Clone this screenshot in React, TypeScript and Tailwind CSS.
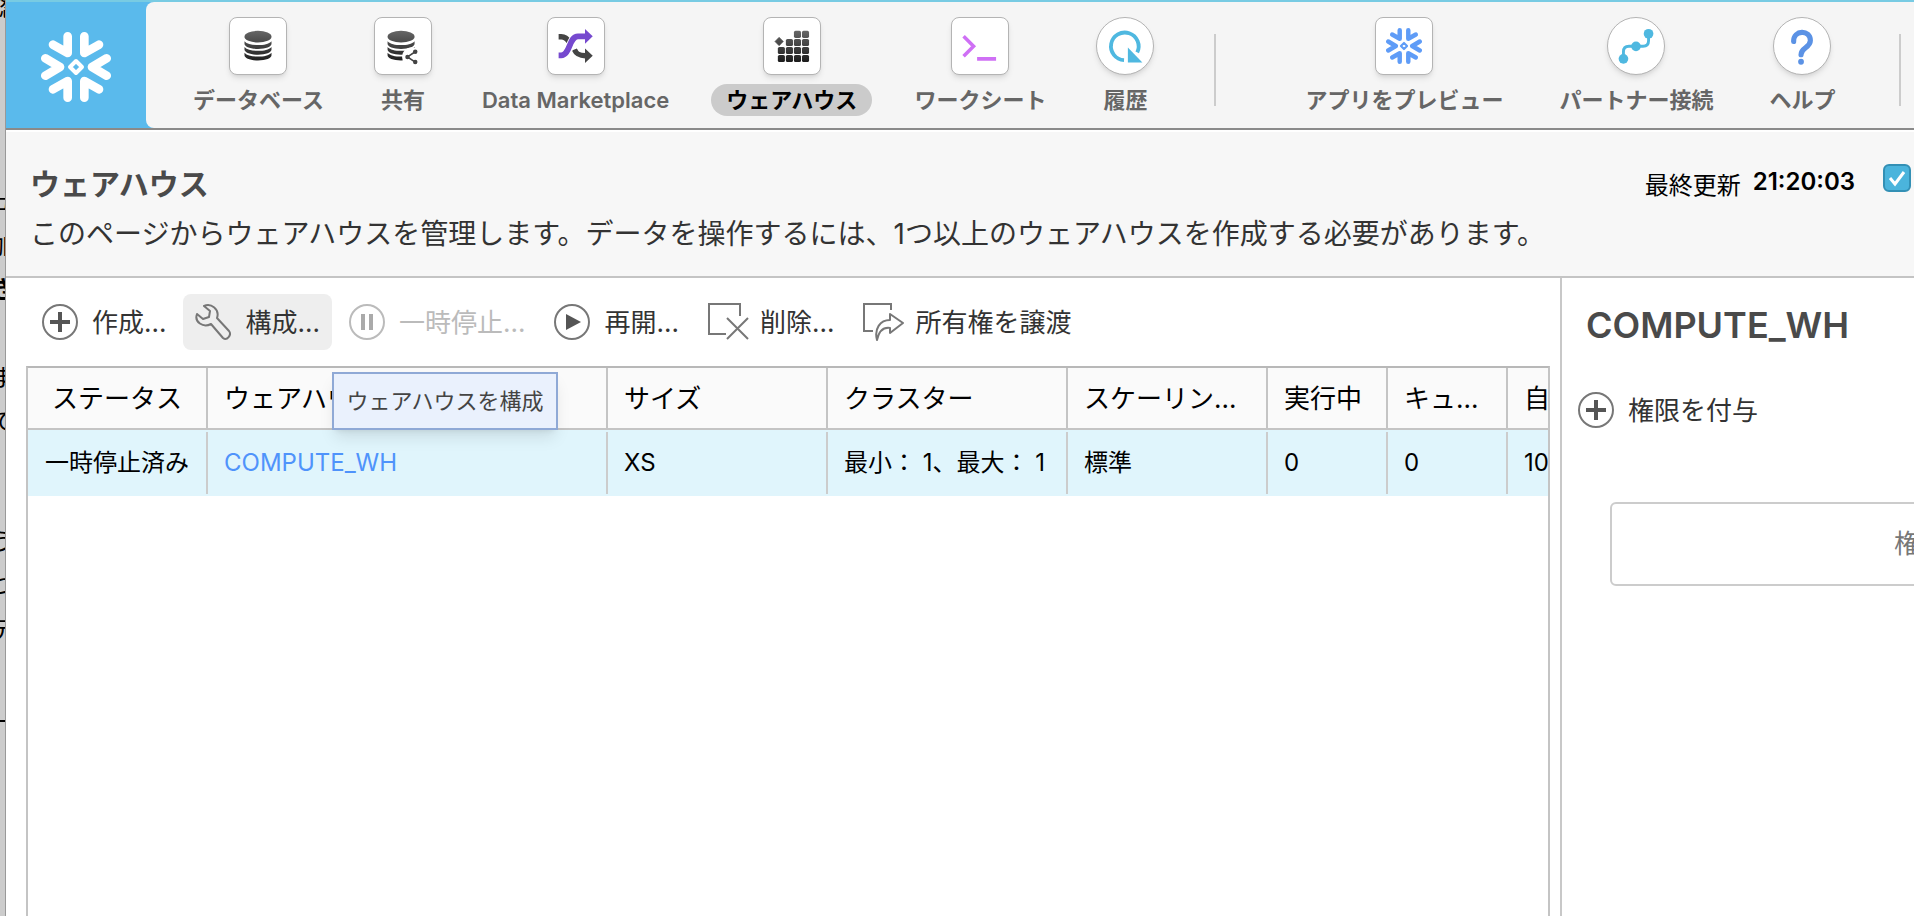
import type { ReactNode } from "react";

const Snowflake = ({ className }: { className: string }) => (
  <svg viewBox="0 0 210 210" fill="none" stroke="currentColor" className={className}>
    <g strokeWidth="26" strokeLinecap="round" strokeLinejoin="round">
      <path d="M80 13V63L36 38" />
      <path d="M130 13V63L174 38" />
      <path d="M80 197V147L36 172" />
      <path d="M130 197V147L174 172" />
      <path d="M13 79L57 105L13 131" />
      <path d="M197 79L153 105L197 131" />
    </g>
    <path d="M105 87L123 105L105 123L87 105Z" strokeWidth="12" strokeLinejoin="round" />
  </svg>
);

const Tile = ({ round, children }: { round?: boolean; children: ReactNode }) => (
  <span
    className={`flex size-[58px] items-center justify-center border border-[#b4b4b4] bg-white shadow-md ${
      round ? "rounded-full" : "rounded-lg"
    }`}
  >
    {children}
  </span>
);

const Glyph = ({ children }: { children: ReactNode }) => (
  <svg viewBox="0 0 174 174" fill="none" className="size-full">
    <defs>
      <linearGradient id="ink" gradientUnits="userSpaceOnUse" x1="0" y1="40" x2="0" y2="136">
        <stop offset="0" stopColor="#666" />
        <stop offset="1" stopColor="#1c1c1c" />
      </linearGradient>
    </defs>
    {children}
  </svg>
);

const Disks = () => (
  <g fill="url(#ink)">
    <ellipse cx="87" cy="58" rx="42" ry="18" />
    {[72, 90, 108].map((y) => (
      <path key={y} d={`M45 ${y}c8 9 24 12 42 12s34-3 42-12v8c0 9-18 16-42 16s-42-7-42-16z`} />
    ))}
  </g>
);

const bricks = [
  [93, 40], [118, 40],
  [68, 65], [93, 65], [118, 65],
  [43, 90], [68, 90], [93, 90], [118, 90],
  [43, 115], [68, 115], [93, 115], [118, 115],
];

const mainNav = [
  { label: "データベース", icon: <Disks /> },
  {
    label: "共有",
    icon: (
      <>
        <g transform="translate(-6 0)">
          <Disks />
        </g>
        <circle cx="114" cy="121" r="30" fill="#fff" />
        <path d="M125 105L101 121L125 137" stroke="#444" strokeWidth="5" />
        <g fill="#444">
          <circle cx="125" cy="105" r="7" />
          <circle cx="101" cy="121" r="7" />
          <circle cx="125" cy="137" r="7" />
        </g>
      </>
    ),
  },
  {
    label: "Data Marketplace",
    icon: (
      <>
        <path d="M33 58h8c12 0 19 6 24 16M82 98c6 14 14 19 34 19" stroke="#444" strokeWidth="17" />
        <path d="M115 95L139 117L115 140Z" fill="#444" />
        <path d="M41 117c30 0 24-60 54-60" stroke="#fff" strokeWidth="26" />
        <path d="M33 116h8c28 0 24-59 52-59h24" stroke="#7649cf" strokeWidth="18" />
        <path d="M115 34L139 57L115 80Z" fill="#7649cf" />
      </>
    ),
  },
  {
    label: "ウェアハウス",
    active: true,
    icon: (
      <g fill="url(#ink)">
        {bricks.map(([x, y]) => (
          <rect key={`${x}-${y}`} x={x} y={y} width="22" height="22" rx="5" />
        ))}
        <path d="M47 60L60 73L47 86L34 73Z" stroke="#555" strokeWidth="2" strokeLinejoin="round" />
      </g>
    ),
  },
  {
    label: "ワークシート",
    icon: <path d="M36 57L67 88L36 119M78 127H137" stroke="#cf70f5" strokeWidth="11" />,
  },
  {
    label: "履歴",
    round: true,
    icon: (
      <>
        <path d="M84 131A43 43 0 1 1 125 107" stroke="#4fb8e0" strokeWidth="12" />
        <path d="M96 92V138H141Z" fill="#4fb8e0" />
      </>
    ),
  },
];

const sideNav = [
  { label: "アプリをプレビュー", logo: true, icon: null },
  {
    label: "パートナー接続",
    round: true,
    icon: (
      <>
        <path d="M48 127V105q0-17 17-17H109q17 0 17-17V49" stroke="#4fb8e0" strokeWidth="9" />
        <g fill="#4fb8e0">
          <circle cx="126" cy="49" r="15" />
          <circle cx="87" cy="88" r="15" />
          <circle cx="48" cy="127" r="15" />
        </g>
      </>
    ),
  },
  {
    label: "ヘルプ",
    round: true,
    icon: (
      <>
        <path
          d="M61 73C60 36 113 35 113 70C113 93 84 91 84 114"
          stroke="#5b92e5"
          strokeWidth="16"
          strokeLinecap="round"
        />
        <circle cx="84" cy="136" r="9" fill="#5b92e5" />
      </>
    ),
  },
];

type NavItemProps = {
  label: string;
  icon: ReactNode;
  active?: boolean;
  round?: boolean;
  logo?: boolean;
};

const NavItem = ({ label, icon, active, round, logo }: NavItemProps) => (
  <button type="button" className="flex shrink-0 flex-col items-center gap-[9px]">
    <Tile round={round}>
      {logo ? <Snowflake className="size-9 text-[#5f9cf7]" /> : <Glyph>{icon}</Glyph>}
    </Tile>
    <span
      className={`h-8 rounded-full px-[15px] text-[22px] leading-8 font-semibold whitespace-nowrap ${
        active ? "bg-[#cbcbcb] text-black" : "text-[#666]"
      }`}
    >
      {label}
    </span>
  </button>
);

const PlusIcon = () => (
  <svg viewBox="0 0 36 36" fill="none" className="size-9 shrink-0">
    <circle cx="18" cy="18" r="17" stroke="#777" strokeWidth="2" />
    <path d="M18 8V28M8 18H28" stroke="#555" strokeWidth="4" />
  </svg>
);

const tools = [
  { label: "作成...", icon: <PlusIcon /> },
  {
    label: "構成...",
    hover: true,
    icon: (
      <svg viewBox="0 0 36 36" fill="none" stroke="#777" strokeWidth="2" strokeLinejoin="round" className="size-9">
        <path d="M9 2C16 -1 25 5 22 14L34 27C37 31 32 37 28 34L16 20C8 24 -1 18 2 10L8 15L14 13L15 7Z" />
      </svg>
    ),
  },
  {
    label: "一時停止...",
    disabled: true,
    icon: (
      <svg viewBox="0 0 36 36" fill="none" className="size-9">
        <circle cx="18" cy="18" r="17" stroke="#bbb" strokeWidth="2" />
        <path d="M14 10V26M22 10V26" stroke="#aaa" strokeWidth="4" />
      </svg>
    ),
  },
  {
    label: "再開...",
    icon: (
      <svg viewBox="0 0 36 36" fill="none" className="size-9">
        <circle cx="18" cy="18" r="17" stroke="#777" strokeWidth="2" />
        <path d="M12 10L27 18L12 26Z" fill="#555" />
      </svg>
    ),
  },
  {
    label: "削除...",
    icon: (
      <svg viewBox="0 0 42 38" fill="none" stroke="#777" strokeWidth="2" className="-mr-1 h-[38px] w-[42px]">
        <path d="M32 13V1H1V31H18M19 15L40 36M40 15L19 36" />
      </svg>
    ),
  },
  {
    label: "所有権を譲渡",
    icon: (
      <svg viewBox="0 0 42 38" fill="none" stroke="#777" strokeWidth="2" className="-mr-1 h-[38px] w-[42px]">
        <path d="M28 7V1H1V28H10" />
        <path d="M27 11L40 20L27 30V25C20 24 16 28 14 37C11 26 17 17 27 17Z" strokeLinejoin="round" />
      </svg>
    ),
  },
];

const columns = [
  { title: "ステータス", value: "一時停止済み", width: "w-[180px]", center: true },
  { title: "ウェアハウス", value: "COMPUTE_WH", width: "w-[400px]", link: true },
  { title: "サイズ", value: "XS", width: "w-[220px]" },
  { title: "クラスター", value: "最小： 1、最大： 1", width: "w-[240px]" },
  { title: "スケーリン...", value: "標準", width: "w-[200px]" },
  { title: "実行中", value: "0", width: "w-[120px]" },
  { title: "キュ...", value: "0", width: "w-[120px]" },
  { title: "自動", value: "10分", width: "w-[120px]" },
];

const Header = () => (
  <header className="flex h-[130px] border-t-2 border-b-2 border-t-[#78cbe3] border-b-[#8a8a8a] bg-[#5abaec]">
    <a
      href="#home"
      aria-label="Snowflake"
      className="flex w-[140px] shrink-0 items-center justify-center pt-1 text-white"
    >
      <Snowflake className="size-[70px]" />
    </a>
    <nav className="flex min-w-0 flex-1 items-start overflow-hidden rounded-l-lg bg-[#f5f5f5] pt-[15px] pl-8">
      <div className="flex gap-[27px]">
        {mainNav.map((item) => (
          <NavItem key={item.label} {...item} />
        ))}
      </div>
      <div className="mt-[17px] mr-[74px] ml-[52px] h-[72px] w-0.5 shrink-0 bg-[#ccc]" />
      <div className="flex gap-[26px]">
        {sideNav.map((item) => (
          <NavItem key={item.label} {...item} />
        ))}
      </div>
      <div className="mt-[17px] ml-[49px] h-[72px] w-0.5 shrink-0 bg-[#ccc]" />
    </nav>
  </header>
);

const PageTitle = () => (
  <section className="flex h-[148px] justify-between border-t-2 border-b-2 border-t-white border-b-[#c4c4c4] bg-[#f7f7f7] pr-[3px] pl-6">
    <div className="pt-8 whitespace-nowrap">
      <h1 className="text-[30px] leading-10 font-bold text-[#4a4a4a]">ウェアハウス</h1>
      <p className="mt-[10px] text-[28px] leading-10 text-[#333]">
        このページからウェアハウスを管理します。データを操作するには、1つ以上のウェアハウスを作成する必要があります。
      </p>
    </div>
    <div className="flex h-fit items-start gap-3 pt-8 text-2xl whitespace-nowrap text-black">
      <span className="mt-1.5">最終更新</span>
      <span className="mt-0.5 font-semibold">21:20:03</span>
      <span className="ml-4 grid size-7 place-items-center">
        <input
          type="checkbox"
          defaultChecked
          aria-label="自動更新"
          className="col-start-1 row-start-1 size-7 appearance-none rounded-md border-2 border-[#3390b5] bg-[#4bb4dc]"
        />
        <svg viewBox="0 0 28 28" fill="none" className="pointer-events-none col-start-1 row-start-1 size-7">
          <path d="M7 14L12 20L21 8" stroke="#fff" strokeWidth="3" />
        </svg>
      </span>
    </div>
  </section>
);

const Toolbar = () => (
  <div className="flex gap-[5px] px-6 py-4">
    {tools.map(({ label, icon, hover, disabled }) => (
      <div key={label} className="relative">
        <button
          type="button"
          disabled={disabled}
          className={`flex h-14 items-center gap-[14px] rounded-lg px-3 text-[26px] whitespace-nowrap ${
            hover ? "bg-[#eee]" : ""
          } ${disabled ? "text-[#bbb]" : "text-[#333]"}`}
        >
          {icon}
          {label}
        </button>
        {hover && (
          <div
            role="tooltip"
            className="absolute top-[78px] left-[149px] z-10 border-2 border-[#8fa9d6] bg-[#eaf1fd] px-3 text-[22px] leading-[54px] whitespace-nowrap text-[#444] shadow-lg"
          >
            ウェアハウスを構成
          </div>
        )}
      </div>
    ))}
  </div>
);

const WarehouseTable = () => (
  <div className="mr-[10px] ml-5 flex-1 overflow-hidden border-2 border-b-0 border-[#c4c4c4] border-t-[#b8b8b8]">
    <table className="w-[1600px] table-fixed border-separate border-spacing-0 text-left text-black">
      <thead>
        <tr className="h-[62px] bg-[#fafafa] text-[26px]">
          {columns.map(({ title, width, center }) => (
            <th
              key={title}
              className={`border-r-2 border-b-2 border-[#c4c4c4] p-0 font-normal whitespace-nowrap ${width} ${
                center ? "text-center" : "pl-4"
              }`}
            >
              {title}
            </th>
          ))}
        </tr>
      </thead>
      <tbody>
        <tr className="bg-[#e0f5fc] text-2xl">
          {columns.map(({ title, value, center, link }) => (
            <td key={title} className="px-0 py-[2px]">
              <div
                className={`h-[62px] border-r-2 border-[#ccc] leading-[62px] whitespace-nowrap ${
                  center ? "text-center" : "pl-4"
                }`}
              >
                {link ? (
                  <a href="#compute-wh" className="text-[#4f93fb]">
                    {value}
                  </a>
                ) : (
                  value
                )}
              </div>
            </td>
          ))}
        </tr>
      </tbody>
    </table>
  </div>
);

const DetailPanel = () => (
  <aside className="w-[354px] shrink-0 overflow-hidden border-l-2 border-[#c8c8c8]">
    <h2 className="mt-6 ml-6 text-4xl leading-[46px] font-semibold text-[#4a4a4a]">COMPUTE_WH</h2>
    <button type="button" className="mt-[34px] ml-4 flex h-14 items-center gap-[14px] text-[26px] text-[#333]">
      <PlusIcon />
      権限を付与
    </button>
    <div className="mt-16 ml-12 h-[84px] w-[594px] rounded-md border-2 border-[#ccc] text-center text-[26px] leading-20 text-[#777]">
      権
    </div>
  </aside>
);

// Sliver of the page that lies behind the window
const BackgroundPage = () => (
  <div
    aria-hidden="true"
    className="flex w-[6px] shrink-0 flex-col items-center overflow-hidden border-r border-[#999] bg-[#ccc] text-2xl leading-[44px] text-black"
  >
    <span className="h-[180px] leading-4">認</span>
    <span>ュ</span>
    <span>加</span>
    <span className="h-[88px] font-bold">き</span>
    <span>ま</span>
    <span className="h-[120px]">て</span>
    <span>う</span>
    <span>つ</span>
    <span className="h-[112px]">デ</span>
    <span className="h-0.5 w-full bg-black" />
  </div>
);

const App = () => {
  return (
    <div className="flex h-screen overflow-hidden bg-white font-['Inter','Noto_Sans_CJK_JP',sans-serif]">
      <BackgroundPage />
      <div className="flex min-w-0 flex-1 flex-col">
        <Header />
        <PageTitle />
        <div className="flex min-h-0 flex-1">
          <main className="flex min-w-0 flex-1 flex-col">
            <Toolbar />
            <WarehouseTable />
          </main>
          <DetailPanel />
        </div>
      </div>
    </div>
  );
};

export default App;
